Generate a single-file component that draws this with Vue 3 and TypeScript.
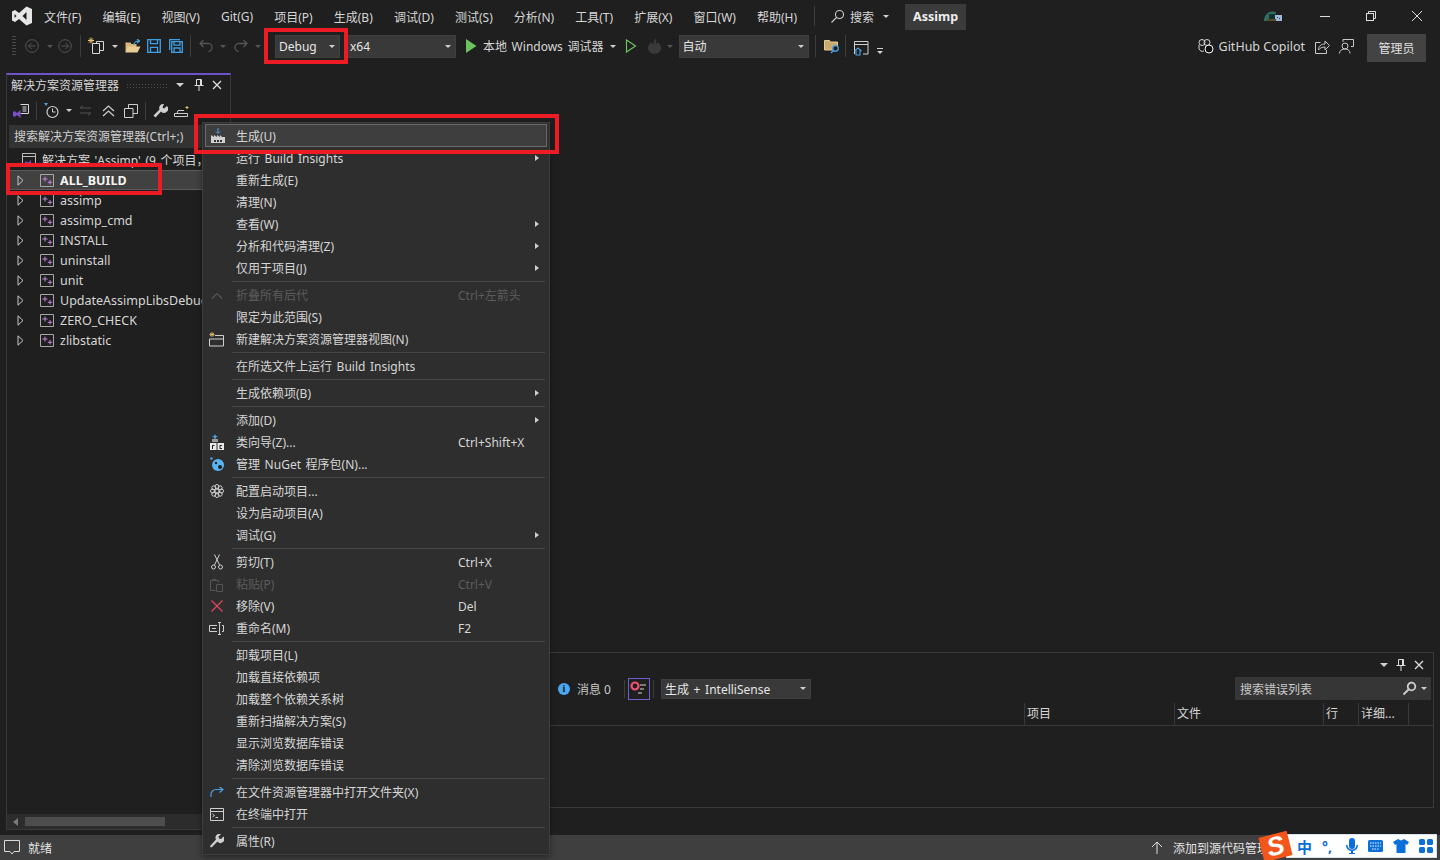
<script setup lang="ts">
interface MenuRow {
  label?: string
  key?: string
  arrow?: boolean
  off?: boolean
  icon?: string
  sep?: boolean
}

const menus = ['文件(F)', '编辑(E)', '视图(V)', 'Git(G)', '项目(P)', '生成(B)', '调试(D)', '测试(S)', '分析(N)', '工具(T)', '扩展(X)', '窗口(W)', '帮助(H)']

const projects = ['ALL_BUILD', 'assimp', 'assimp_cmd', 'INSTALL', 'uninstall', 'unit', 'UpdateAssimpLibsDebug', 'ZERO_CHECK', 'zlibstatic']

const rows: MenuRow[] = [
  { label: '生成(U)', icon: 'build' },
  { label: '运行 Build Insights', arrow: true },
  { label: '重新生成(E)' },
  { label: '清理(N)' },
  { label: '查看(W)', arrow: true },
  { label: '分析和代码清理(Z)', arrow: true },
  { label: '仅用于项目(J)', arrow: true },
  { sep: true },
  { label: '折叠所有后代', key: 'Ctrl+左箭头', off: true, icon: 'collapse' },
  { label: '限定为此范围(S)' },
  { label: '新建解决方案资源管理器视图(N)', icon: 'newview' },
  { sep: true },
  { label: '在所选文件上运行 Build Insights' },
  { sep: true },
  { label: '生成依赖项(B)', arrow: true },
  { sep: true },
  { label: '添加(D)', arrow: true },
  { label: '类向导(Z)...', key: 'Ctrl+Shift+X', icon: 'wizard' },
  { label: '管理 NuGet 程序包(N)...', icon: 'nuget' },
  { sep: true },
  { label: '配置启动项目...', icon: 'gear' },
  { label: '设为启动项目(A)' },
  { label: '调试(G)', arrow: true },
  { sep: true },
  { label: '剪切(T)', key: 'Ctrl+X', icon: 'cut' },
  { label: '粘贴(P)', key: 'Ctrl+V', off: true, icon: 'paste' },
  { label: '移除(V)', key: 'Del', icon: 'remove' },
  { label: '重命名(M)', key: 'F2', icon: 'rename' },
  { sep: true },
  { label: '卸载项目(L)' },
  { label: '加载直接依赖项' },
  { label: '加载整个依赖关系树' },
  { label: '重新扫描解决方案(S)' },
  { label: '显示浏览数据库错误' },
  { label: '清除浏览数据库错误' },
  { sep: true },
  { label: '在文件资源管理器中打开文件夹(X)', icon: 'reveal' },
  { label: '在终端中打开', icon: 'terminal' },
  { sep: true },
  { label: '属性(R)', icon: 'wrench' },
]
</script>

<template>
  <div class="ide">
    <header class="titlebar">
      <svg class="logo" width="20" height="20" viewBox="0 0 20 20"><path d="M14.5 0.5 20 3v14l-5.5 2.5L7 13l-4 3-3-1.5v-9L3 4l4 3zM14.5 6 10.500 10l4 4zM2.500 8v4l2-2z" fill="#e6e6e6" fill-rule="evenodd"/></svg>
      <nav class="menus">
        <span v-for="m in menus" :key="m">{{ m }}</span>
      </nav>
      <i class="vsep tall"></i>
      <div class="search">
        <svg width="15" height="15" viewBox="0 0 15 15" fill="none" stroke="#cfcfcf" stroke-width="1.1"><circle cx="9.500" cy="5.500" r="4"/><path d="M6.500 8.500 1.500 13.500"/></svg>
        <span>搜索</span><b class="caret"></b>
      </div>
      <div class="solution">Assimp</div>
      <div class="winbtns">
        <svg class="tinypic" width="20" height="12" viewBox="0 0 20 12"><path d="M1 11a9 9 0 0 1 12-9l-2 9z" fill="#2f6f5f"/><path d="M6 4h6v7H6z" fill="#16322c"/><path d="M12 5h7v6h-7z" fill="#9fb8dc"/><path d="M4 9h9v2H4z" fill="#5a4a2a"/><path d="M14 7h1v1h-1zM16 8h1v1h-1z" fill="#2a3a5c"/></svg>
        <svg class="winic" width="12" height="12" viewBox="0 0 12 12"><path d="M1 6.500h10" stroke="#ddd"/></svg>
        <svg class="winic" width="12" height="12" viewBox="0 0 12 12" fill="none" stroke="#ddd"><rect x="1.500" y="3.500" width="7" height="7"/><path d="M3.500 3.500v-2h7v7h-2"/></svg>
        <svg class="winic" width="12" height="12" viewBox="0 0 12 12"><path d="M1 1l10 10M11 1 1 11" stroke="#ddd"/></svg>
      </div>
    </header>

    <div class="toolbar">
      <i class="grip"></i>
      <svg width="14" height="14" viewBox="0 0 14 14" fill="none" stroke="#555" class="t-back"><circle cx="7" cy="7" r="6.300"/><path d="M10.500 7h-7M6.500 4l-3 3 3 3"/></svg>
      <b class="caret dim c1"></b>
      <svg width="14" height="14" viewBox="0 0 14 14" fill="none" stroke="#555" class="t-fwd"><circle cx="7" cy="7" r="6.300"/><path d="M3.500 7h7M7.500 4l3 3-3 3"/></svg>
      <i class="vsep s1"></i>
      <svg width="18" height="18" viewBox="0 0 18 18" fill="none" stroke="#d8d8d8" class="t-new"><path d="M5.500 6.500h7v10h-7z"/><path d="M9.500 6.500v-2h7v9h-4"/><path d="M4 0.500v6M1 3.500h6M2 1.500l4 4M6 1.500l-4 4" stroke="#e8c56b"/></svg>
      <b class="caret c2"></b>
      <svg width="16" height="14" viewBox="0 0 16 14" class="t-open"><path d="M0.500 3.500h5l1 1.500h5v8h-11z" fill="#dcb67a"/><path d="M3 7.500h12.500l-3 6h-12z" fill="#e9cd96"/><path d="M9 6c0-3 2-4 5-4M12 0l2.500 2L12 4" stroke="#4aa0e6" stroke-width="1.200" fill="none"/></svg>
      <svg width="14" height="14" viewBox="0 0 14 14" fill="none" stroke="#3e9fe6" stroke-width="1.300" class="t-save"><path d="M.7.7h12.600v12.600H.7z"/><path d="M3.500.7v4h7v-4M3.500 13.300v-5h7v5"/></svg>
      <svg width="14" height="14" viewBox="0 0 14 14" fill="none" stroke="#3e9fe6" stroke-width="1.300" class="t-saveall"><path d="M2.700 2.700h10.600v10.600H2.700z"/><path d="M.7 11V.7H11"/><path d="M5 2.700v3.500h6V2.700M5 13.300V9h6v4.300"/></svg>
      <i class="vsep s2"></i>
      <svg width="14" height="14" viewBox="0 0 14 14" fill="none" stroke="#565656" stroke-width="1.300" class="t-undo"><path d="M4.500 1 1 4.500 4.500 8M1 4.500h7.500a4 4 0 0 1 1 8"/></svg>
      <b class="caret dim c3"></b>
      <svg width="14" height="14" viewBox="0 0 14 14" fill="none" stroke="#565656" stroke-width="1.300" class="t-redo"><path d="M9.500 1 13 4.500 9.500 8M13 4.500H5.500a4 4 0 0 0-1 8"/></svg>
      <b class="caret dim c4"></b>
      <div class="combo debug"><span>Debug</span><b class="caret"></b></div>
      <div class="combo x64"><span>x64</span><b class="caret"></b></div>
      <svg width="12" height="14" viewBox="0 0 12 14" class="t-play"><path d="M1 0l10.500 7L1 14z" fill="#6cc25f"/></svg>
      <span class="runlabel">本地 Windows 调试器</span>
      <b class="caret c5"></b>
      <svg width="12" height="14" viewBox="0 0 12 14" class="t-play2"><path d="M1.500 1l9 6-9 6z" fill="none" stroke="#6cc25f" stroke-width="1.200"/></svg>
      <svg width="14" height="16" viewBox="0 0 14 16" class="t-flame"><path d="M9 0c1 3-1 4 1 6 1-1 1-2 1-2 2 2 3 4 3 6a6.500 6 0 0 1-13 0c0-3 2-4 3-6 1 1 1 2 2 2 1-2 1-4 3-6z" fill="#3a3a3a"/></svg>
      <b class="caret dim c6"></b>
      <div class="combo auto"><span>自动</span><b class="caret"></b></div>
      <i class="vsep s3"></i>
      <svg width="16" height="16" viewBox="0 0 16 16" class="t-folder"><path d="M.5 2.500h5l1 1.500h7v8H.5z" fill="#c9aa71" stroke="#e6cb95"/><circle cx="11.500" cy="10.500" r="2.800" fill="#1f1f1f" stroke="#4aa0e6" stroke-width="1.300"/><path d="M9.500 12.500 7 15" stroke="#4aa0e6" stroke-width="1.500"/></svg>
      <i class="vsep s4"></i>
      <svg width="15" height="15" viewBox="0 0 15 15" fill="none" class="t-win"><path d="M.5 13V.5h13.500V13H9M.5 3.500h13.500" stroke="#d0d0d0"/><path d="M.5 10 4 7l3.500 3M2 9v5h4V9" stroke="#4aa0e6" stroke-width="1.100"/></svg>
      <div class="overflow"><i></i><b class="caret"></b></div>
      <div class="tb-right">
        <svg width="16" height="16" viewBox="0 0 16 16" fill="none" stroke="#d8d8d8"><circle cx="4" cy="4.500" r="3"/><circle cx="9" cy="4.500" r="3"/><path d="M1 7v3.500a3.500 3.500 0 0 0 5 2.500"/><circle cx="11" cy="11" r="4" fill="#111" stroke="#fff"/></svg>
        <span class="copilot">GitHub Copilot</span>
        <svg class="t-share" width="15" height="15" viewBox="0 0 15 15" fill="none" stroke="#c8c8c8"><path d="M5.500 3.500H.5v11h11V11"/><path d="M3.500 11c0-4 3-6 6.500-6V2l4.500 4.500L10 11V8c-3 0-5 1-6.500 3z"/></svg>
        <svg class="t-feedback" width="15" height="15" viewBox="0 0 15 15" fill="none" stroke="#c8c8c8"><path d="M4 3V.5h10.500v7H12"/><circle cx="6" cy="7" r="3"/><path d="M.5 14.500c0-3 2.500-4.500 5.500-4.500s5 1.500 5 4.500"/></svg>
        <button class="admin">管理员</button>
      </div>
    </div>

    <main class="workspace">
      <section class="explorer">
        <div class="panel-head">
          <span class="panel-title">解决方案资源管理器</span>
          <i class="dots"></i>
          <b class="caret big"></b>
          <svg width="10" height="12" viewBox="0 0 10 12" fill="none" stroke="#ddd" class="pin"><path d="M2.500.5h5v6h-5zM.5 6.500h9M5 7v5M6.500 1v5" /></svg>
          <svg width="10" height="10" viewBox="0 0 10 10" class="close"><path d="M1 1l8 8M9 1 1 9" stroke="#ddd" stroke-width="1.300"/></svg>
        </div>
        <div class="panel-tools">
          <svg width="16" height="16" viewBox="0 0 16 16" fill="none"><path d="M7.500 1.500h8v9h-8M9.500 4h4M9.500 6h4M9.500 8h4" stroke="#d8d8d8"/><path d="M0 9l1.500-1 2.500 2 3.500-3v8L4 12l-2.500 2L0 13z" fill="#7b4fc9"/></svg>
          <i class="vsep"></i>
          <svg width="16" height="16" viewBox="0 0 16 16" fill="none"><path d="M0 0h4L2 3z" fill="#4aa0e6"/><circle cx="8.500" cy="9" r="5.500" stroke="#d0d0d0" stroke-width="1.200"/><path d="M8.500 5.500V9h3" stroke="#d0d0d0"/></svg>
          <b class="caret"></b>
          <svg class="dimic" width="13" height="11" viewBox="0 0 13 11" fill="none" stroke="#555"><path d="M4 .5 1 3h11M9 10.500 12 8H1"/></svg>
          <svg class="chev" width="13" height="12" viewBox="0 0 13 12" fill="none" stroke="#cfcfcf" stroke-width="1.200"><path d="M1 6l5.500-5L12 6M1 11l5.500-5 5.500 5"/></svg>
          <svg class="copy" width="14" height="14" viewBox="0 0 14 14" fill="none" stroke="#d0d0d0"><path d="M.5 4.500h8.500v9H.5z"/><path d="M4.500 4.500v-4h9v9H9"/></svg>
          <i class="vsep"></i>
          <svg width="15" height="15" viewBox="0 0 15 15"><path d="M14 3l-3 2.500-1.500-1 1.500-3.500a4 4 0 0 0-4.500 5.500L.5 12.500 2.500 14.500 8 8.500A4 4 0 0 0 14 3z" fill="#cfcfcf"/></svg>
          <svg class="bench" width="16" height="12" viewBox="0 0 16 12" fill="none" stroke="#cfcfcf"><path d="M.5 8.500h13v3H.5zM3 8.500l1-3h6"/><path d="M13 1v3M11.500 2.500h3" stroke="#e8c56b"/></svg>
        </div>
        <div class="panel-search">搜索解决方案资源管理器(Ctrl+;)</div>
        <div class="tree">
          <div class="tree-root">
            <svg width="14" height="14" viewBox="0 0 14 14"><path d="M.5.500h13v13H.500zM.500 3.500h13" fill="none" stroke="#bdbdbd"/><path d="M3 9l1-.800 2 1.500 3-2.700v6l-3-2-2 1.500L3 12z" fill="#7b4fc9"/></svg>
            <span>解决方案 'Assimp' (9 个项目，共 9 个)</span>
          </div>
          <div v-for="(p, i) in projects" :key="p" class="tree-row" :class="{ picked: i === 0 }">
            <svg class="twist" width="7" height="11" viewBox="0 0 7 11"><path d="M1 .800 6 5.500 1 10.200z" fill="none" stroke="#c8c8c8"/></svg>
            <svg width="14" height="13" viewBox="0 0 14 13" fill="none"><path d="M.5.500h13v12H.500z" stroke="#a8a8a8"/><path d="M5 2.500v5M2.500 5h5M10 6v4.500M7.800 8.300h4.400" stroke="#c586e0"/></svg>
            <span>{{ p }}</span>
          </div>
        </div>
        <div class="hscroll">
          <svg width="6" height="8" viewBox="0 0 6 8"><path d="M5 0v8L0 4z" fill="#7a7a7a"/></svg>
          <i></i>
        </div>
      </section>

      <section class="errors">
        <div class="err-head">
          <b class="caret big"></b>
          <svg width="10" height="12" viewBox="0 0 10 12" fill="none" stroke="#ddd" class="pin"><path d="M2.500.5h5v6h-5zM.5 6.500h9M5 7v5M6.500 1v5"/></svg>
          <svg width="10" height="10" viewBox="0 0 10 10" class="close"><path d="M1 1l8 8M9 1 1 9" stroke="#ddd" stroke-width="1.300"/></svg>
        </div>
        <div class="err-tools">
          <span class="info-dot">i</span>
          <span class="msgs">消息 0</span>
          <i class="vsep"></i>
          <span class="filter">
            <svg width="20" height="18" viewBox="0 0 20 18"><circle cx="6" cy="6" r="3.500" fill="#1f1f1f" stroke="#f1536e" stroke-width="2.200"/><path d="M11 5h6M11 9h4M9 13h4" stroke="#d8d8d8"/></svg>
          </span>
          <i class="vsep"></i>
          <div class="combo scope"><span>生成 + IntelliSense</span><b class="caret"></b></div>
          <div class="err-search">
            <span>搜索错误列表</span>
            <svg width="15" height="15" viewBox="0 0 15 15" fill="none" stroke="#d0d0d0" stroke-width="1.800"><circle cx="9.500" cy="5.500" r="3.800"/><path d="M6.500 8.500 1.500 13.500"/></svg>
            <b class="caret"></b>
          </div>
        </div>
        <div class="err-cols">
          <span class="col-project">项目</span>
          <span class="col-file">文件</span>
          <span class="col-line">行</span>
          <span class="col-detail">详细...</span>
          <span class="col-end"></span>
        </div>
      </section>
    </main>

    <footer class="statusbar">
      <svg width="16" height="16" viewBox="0 0 16 16" fill="none" stroke="#d8d8d8"><path d="M.5.500h15v11h-5.500L8 14l-2-2.500H.5z"/></svg>
      <span class="ready">就绪</span>
      <svg class="up" width="12" height="13" viewBox="0 0 12 13" fill="none" stroke="#e0e0e0"><path d="M6 13V1M1 6l5-5 5 5"/></svg>
      <span class="vcs">添加到源代码管理</span>
    </footer>

    <!-- context menu floats over the panels -->
    <div class="ctx">
      <template v-for="(r, i) in rows" :key="i">
        <div v-if="r.sep" class="ctx-sep"></div>
        <div v-else class="ctx-row" :class="{ off: r.off, hot: i === 0 }">
          <span class="ctx-ic">
            <svg v-if="r.icon === 'build'" width="16" height="16" viewBox="0 0 16 16"><path d="M8 0v5M6 3.500l2 2 2-2" fill="none" stroke="#4aa0e6"/><path d="M1 7l3 2V7l3 2V7l3 2V7l2 2h3v6H1z" fill="#d0d0d0"/><path d="M4 12h2v2H4zM7 12h2v2H7zM10 12h2v2h-2z" fill="#333"/></svg>
            <svg v-else-if="r.icon === 'collapse'" width="12" height="7" viewBox="0 0 12 7"><path d="M1 6.500 6 1.500l5 5" fill="none" stroke="#555" stroke-width="1.200"/></svg>
            <svg v-else-if="r.icon === 'newview'" width="15" height="15" viewBox="0 0 15 15" fill="none"><path d="M6 3.500h8.500v10.500H.5V7M.5 7h14" stroke="#d0d0d0"/><path d="M3 0v5M.5 2.500h5M1 1l4 3M5 1 1 4" stroke="#e8c56b" stroke-width=".8"/></svg>
            <svg v-else-if="r.icon === 'wizard'" width="14" height="16" viewBox="0 0 14 16"><path d="M5 0l1 2 2 .5-2 1L5 6 4 3.500l-2-1 2-.5z" fill="#4aa0e6"/><path d="M2 5h6v3H2z" fill="#9a9a9a"/><path d="M0 9h6.500v7H0zM7.500 9H14v7H7.500z" fill="#e8e8e8"/><path d="M2 11h2.500v1H3v3H2zM9.500 11H12v1h-1.500v2H12v1H9.500z" fill="#222"/></svg>
            <svg v-else-if="r.icon === 'nuget'" width="14" height="14" viewBox="0 0 14 14"><circle cx="1.500" cy="1.500" r="1.300" fill="#4aa0e6"/><circle cx="8" cy="8" r="6" fill="#58b4f2"/><circle cx="10" cy="10" r="2" fill="#1d1d1d"/><circle cx="6" cy="6" r="1.200" fill="#1d1d1d"/></svg>
            <svg v-else-if="r.icon === 'gear'" width="14" height="14" viewBox="0 0 14 14" fill="none" stroke="#cfcfcf"><circle cx="7" cy="7" r="2"/><circle cx="7" cy="2.500" r="2"/><circle cx="7" cy="11.500" r="2"/><circle cx="2.500" cy="7" r="2"/><circle cx="11.500" cy="7" r="2"/><circle cx="3.800" cy="3.800" r="2"/><circle cx="10.200" cy="3.800" r="2"/><circle cx="3.800" cy="10.200" r="2"/><circle cx="10.200" cy="10.200" r="2"/></svg>
            <svg v-else-if="r.icon === 'cut'" width="12" height="16" viewBox="0 0 12 16" fill="none" stroke="#d0d0d0"><circle cx="2.500" cy="13" r="2"/><circle cx="9.500" cy="13" r="2"/><path d="M3.500 11 8.500.5M8.500 11 3.500.5"/></svg>
            <svg v-else-if="r.icon === 'paste'" width="13" height="15" viewBox="0 0 13 15" fill="none" stroke="#555"><path d="M5.500 13.500h-5v-10h8v2M2.500 3.500v-1h1.500a1.500 1.500 0 0 1 2 0v1"/><path d="M6.500 7.500h6v7h-6z"/></svg>
            <svg v-else-if="r.icon === 'remove'" width="12" height="12" viewBox="0 0 12 12"><path d="M.5.500l11 11M11.500.500l-11 11" stroke="#e8475f" stroke-width="1.100"/></svg>
            <svg v-else-if="r.icon === 'rename'" width="15" height="13" viewBox="0 0 15 13" fill="none" stroke="#cfcfcf"><path d="M8 3.500H.5v6H8M13 3.500h1.500v6H13M3 6.500h4"/><path d="M9 .5h3M9 12.500h3M10.500.5v12"/></svg>
            <svg v-else-if="r.icon === 'reveal'" width="14" height="12" viewBox="0 0 14 12" fill="none" stroke="#4aa0e6" stroke-width="1.200"><path d="M9.500 1 13 3.500 9.500 6.500M13 3.500H6a5 5 0 0 0-5 5V11"/></svg>
            <svg v-else-if="r.icon === 'terminal'" width="14" height="13" viewBox="0 0 14 13" fill="none" stroke="#cfcfcf"><path d="M.5.500h13v12H.500zM.500 3.500h13"/><path d="M2.500 6l2 1.500-2 1.500M5.500 9.500h2.500"/></svg>
            <svg v-else-if="r.icon === 'wrench'" width="14" height="14" viewBox="0 0 14 14"><path d="M13.500 2.500 11 5 9 4.500 8.500 2.500 11 .2A3.800 3.800 0 0 0 6 5.500L.5 11.500c-.5.500-.5 1 0 1.500.5.500 1 .5 1.500 0L7.500 7.500a3.800 3.800 0 0 0 6-5z" fill="#cfcfcf"/></svg>
          </span>
          <span class="ctx-label">{{ r.label }}</span>
          <span class="ctx-key">{{ r.key }}</span>
          <b v-if="r.arrow" class="ctx-arrow"></b>
        </div>
      </template>
    </div>

    <!-- red annotation frames drawn on the screenshot -->
    <i class="mark mark-debug"></i>
    <i class="mark mark-build"></i>
    <i class="mark mark-all"></i>

    <!-- input method bar over the status bar -->
    <div class="ime">
      <span class="ime-s">S</span>
      <span class="ime-zh">中</span>
      <span class="ime-punc">°,</span>
      <svg width="12" height="16" viewBox="0 0 12 16" fill="#0a6fd8"><rect x="3" y="0" width="6" height="11" rx="3"/><path d="M0 7h1.500a4.500 4.500 0 0 0 9 0H12a6 6 0 0 1-5 6v2h2v1H3v-1h2v-2a6 6 0 0 1-5-6z"/></svg>
      <svg width="15" height="12" viewBox="0 0 15 12"><rect width="15" height="12" rx="1.500" fill="#0a6fd8"/><path d="M2 3h11M2 6h11M4 9h7" stroke="#fff" stroke-dasharray="1.500 1"/></svg>
      <svg width="16" height="14" viewBox="0 0 16 14"><path d="M5 0l3 1.500L11 0l5 3-2 3-1.500-1v9h-9V5L2 6 0 3z" fill="#0a6fd8"/></svg>
      <svg width="14" height="14" viewBox="0 0 14 14" fill="#0a6fd8"><rect width="6" height="6" rx="1.500"/><rect x="8" width="6" height="6" rx="1.500"/><rect y="8" width="6" height="6" rx="1.500"/><rect x="8" y="8" width="6" height="6" rx="1.500"/></svg>
    </div>
  </div>
</template>

<style>
html, body { margin: 0; background: #1f1f1f; }
</style>

<style scoped>
.ide {
  position: relative; width: 1440px; height: 860px; overflow: hidden;
  display: flex; flex-direction: column;
  background: #1f1f1f; color: #d6d6d6;
  font: 12px "Noto Sans", "Noto Sans CJK SC", sans-serif;
}
svg { flex: none; display: block; }
.caret {
  display: inline-block; flex: none; width: 0; height: 0;
  border-left: 3px solid transparent; border-right: 3px solid transparent; border-top: 3px solid #d0d0d0;
}
.caret.dim { border-top-color: #555; }
.caret.big { border-left-width: 4px; border-right-width: 4px; border-top-width: 4px; }
.vsep { flex: none; display: block; width: 1px; height: 22px; background: #3d3d3d; }

.titlebar { height: 32px; flex: none; display: flex; align-items: center; }
.logo { margin-left: 12px; }
.menus { display: flex; gap: 21.100px; margin-left: 12px; padding-top: 2px; white-space: nowrap; }
.vsep.tall { margin-left: 17px; height: 20px; }
.search { display: flex; align-items: center; gap: 5px; margin-left: 15px; padding-top: 1px; }
.search .caret { margin-left: 4px; }
.solution {
  margin-left: 16px; width: 61px; height: 26px; margin-top: 2px; line-height: 26px; text-align: center;
  background: #3b3b3b; color: #eee; font-weight: 700; font-size: 12.500px;
}
.winbtns { margin-left: auto; display: flex; align-items: center; }
.tinypic { margin-right: 36px; }
.winic { margin-right: 34px; }
.winic:last-child { margin-right: 17px; }

.toolbar { height: 30px; padding-bottom: 2px; box-sizing: border-box; flex: none; display: flex; align-items: center; position: relative; }
.grip {
  display: block; width: 4px; height: 20px; margin-left: 12px;
  background: repeating-linear-gradient(#4a4a4a 0 1px, transparent 1px 3px);
}
.t-back { margin-left: 9px; }
.c1 { margin-left: 8px; }
.t-fwd { margin-left: 5px; }
.s1 { margin-left: 8px; }
.t-new { margin-left: 6px; }
.c2 { margin-left: 7px; }
.t-open { margin-left: 7px; }
.t-save { margin-left: 6px; }
.t-saveall { margin-left: 8px; }
.s2 { margin-left: 7px; }
.t-undo { margin-left: 8px; }
.c3 { margin-left: 7px; }
.t-redo { margin-left: 8px; }
.c4 { margin-left: 7px; }
.combo {
  display: flex; align-items: center; justify-content: space-between; flex: none;
  height: 23px; padding: 0 4px 0 3px; box-sizing: border-box;
  background: #393939; border: 1px solid #3f3f3f; color: #e6e6e6; font-size: 12px;
}
.debug { margin-left: 14px; width: 65px; }
.x64 { margin-left: 5px; width: 111px; padding-left: 4px; }
.t-play { margin-left: 9px; }
.runlabel { margin-left: 6px; white-space: nowrap; word-spacing: 1.500px; }
.c5 { margin-left: 6px; }
.t-play2 { margin-left: 9px; }
.t-flame { margin-left: 10px; }
.c6 { margin-left: 6px; }
.auto { margin-left: 6px; width: 130px; }
.s3 { margin-left: 6px; }
.t-folder { margin-left: 8px; }
.s4 { margin-left: 5px; }
.t-win { margin-left: 8px; margin-top: 4px; }
.overflow { margin-left: 8px; margin-top: 10px; display: flex; flex-direction: column; gap: 2px; align-items: center; }
.overflow i { display: block; width: 6px; height: 1px; background: #d0d0d0; }
.tb-right { margin-left: auto; display: flex; align-items: center; padding-right: 14px; }
.copilot { margin-left: 5px; font-size: 12.500px; white-space: nowrap; }
.t-share { margin-left: 10px; }
.t-feedback { margin-left: 9px; }
.admin {
  margin-left: 13px; margin-top: 4px; width: 59px; height: 28px; padding: 0; border: 0;
  background: #434343; color: #e0e0e0; font: inherit;
}

.workspace {
  flex: 1; min-height: 0; display: flex; gap: 5px; padding: 11px 6px 5px; box-sizing: border-box;
}
.explorer {
  width: 225px; flex: none; display: flex; flex-direction: column; box-sizing: border-box;
  border: 1px solid #3a3a3a; border-top: 2px solid #6f52c8;
}
.panel-head { height: 21px; box-sizing: border-box; display: flex; align-items: center; padding: 0 8px 1px 4px; flex: none; }
.panel-title { white-space: nowrap; }
.dots {
  flex: 1; height: 5px; margin: 0 7px;
  background: radial-gradient(circle, #4b4b4b 0.500px, transparent 1px) 0 0 / 3px 3px;
}
.pin { margin-left: 10px; }
.close { margin-left: 8px; }
.panel-tools { height: 29px; display: flex; align-items: center; gap: 7px; padding-left: 6px; flex: none; }
.panel-tools .vsep { height: 18px; }
.panel-tools .caret { margin-left: -1px; }
.panel-tools .chev { margin-left: 3px; }
.panel-tools .copy { margin-left: 2px; }
.panel-tools .bench { margin-left: -1px; }
.panel-search {
  height: 23px; line-height: 23px; padding-left: 5px; margin: 0 2px; flex: none; white-space: nowrap; overflow: hidden;
  background: #333; color: #cfcfcf;
}
.tree { flex: 1; min-height: 0; padding-top: 2px; overflow: hidden; font-size: 12.500px; }
.tree-root { height: 20px; display: flex; align-items: center; gap: 6px; padding-left: 15px; white-space: nowrap; font-size: 12px; word-spacing: 1.500px; }
.tree-row { height: 20px; display: flex; align-items: center; padding-left: 10px; white-space: nowrap; }
.tree-row.picked { background: #414141; color: #f4f4f4; font-weight: 700; box-shadow: inset 0 1px #5a5a5a, inset 0 -1px #5a5a5a; }
.twist { margin-right: 16px; }
.tree-row span { margin-left: 6px; }
.hscroll { height: 15px; flex: none; display: flex; align-items: center; gap: 6px; padding-left: 6px; background: #2c2c2c; }
.hscroll i { display: block; width: 140px; height: 9px; background: #4d4d4d; }

.errors {
  flex: 1; align-self: flex-end; height: 156px; box-sizing: border-box; margin-bottom: 22px;
  border: 1px solid #3a3a3a; display: flex; flex-direction: column;
}
.err-head { height: 23px; flex: none; display: flex; align-items: center; justify-content: flex-end; padding-right: 9px; }
.err-head .pin { margin-left: 8px; }
.err-tools { height: 25px; flex: none; display: flex; align-items: center; padding-left: 321px; }
.err-tools .vsep { height: 18px; }
.info-dot {
  width: 12px; height: 12px; border-radius: 50%; background: #4aa8f0; color: #10202c;
  font: 700 10px/12px "Liberation Serif", serif; text-align: center;
}
.msgs { margin-left: 7px; margin-right: 13px; color: #c9c9c9; font-size: 12px; }
.filter { width: 20px; height: 20px; margin: 0 3px; border: 1px solid #6c5fd0; display: flex; align-items: center; justify-content: center; }
.scope { margin-left: 7px; width: 150px; height: 20px; word-spacing: 1.500px; }
.err-search {
  margin-left: auto; margin-right: 2px; width: 196px; height: 23px; box-sizing: border-box;
  display: flex; align-items: center; gap: 4px; padding: 0 4px 0 5px; background: #363636; color: #c8c8c8;
}
.err-search span { flex: 1; }
.err-cols { height: 22px; margin-top: 2px; flex: none; display: flex; border-bottom: 1px solid #3a3a3a; }
.err-cols span { box-sizing: border-box; border-left: 1px solid #3a3a3a; padding-left: 2px; line-height: 22px; flex: none; }
.col-project { margin-left: 787px; width: 150px; }
.col-file { width: 149px; }
.col-line { width: 35px; }
.col-detail { width: 50px; }
.col-end { width: 23px; }

.statusbar {
  height: 25px; flex: none; display: flex; align-items: center; background: #3f3f3f; color: #e4e4e4;
  padding-left: 4px;
}
.ready { margin-left: 8px; }
.up { margin-left: auto; }
.vcs { margin-left: 10px; width: 88px; margin-right: 179px; white-space: nowrap; }

.ctx {
  position: absolute; left: 202px; top: 122px; width: 348px; height: 733px; box-sizing: border-box;
  padding: 1px 2px 0 1px; background: #2e2e2e; border: 1px solid #3e3e3e;
  box-shadow: 0 2px 6px rgba(0, 0, 0, .4);
}
.ctx-row {
  height: 22px; display: grid; grid-template-columns: 32px 222px 1fr 12px; align-items: center;
  box-sizing: border-box; color: #d6d6d6; white-space: nowrap; word-spacing: 1.500px;
}
.ctx-row.hot { height: 23px; background: #3e3e3e; border: 1px solid #6a6a6a; margin-left: 1px; grid-template-columns: 30px 222px 1fr 12px; }
.ctx-row.off { color: #5c5c5c; }
.ctx-ic { display: flex; justify-content: center; align-items: center; padding-right: 7px; }
.ctx-arrow {
  width: 0; height: 0; border-top: 3.500px solid transparent; border-bottom: 3.500px solid transparent;
  border-left: 4px solid #cfcfcf;
}
.ctx-sep { height: 1px; margin: 2px 2px 2px 28px; background: #454545; }

.mark { position: absolute; display: block; box-sizing: border-box; border: 4px solid #ed1c24; }
.mark-debug { left: 264px; top: 28px; width: 84px; height: 36px; }
.mark-build { left: 194px; top: 114px; width: 365px; height: 40px; }
.mark-all { left: 6px; top: 163px; width: 156px; height: 32px; }

.ime {
  position: absolute; left: 1286px; top: 834px; width: 151px; height: 24px; box-sizing: border-box;
  background: #fff; display: flex; align-items: center; gap: 10px; padding-left: 10px;
  border: 1px solid #d8e4f0;
}
.ime-s {
  position: absolute; left: -26px; top: -1px; width: 29px; height: 25px; text-align: center;
  background: #f2561a; color: #fff; font: italic 700 26px/25px "Liberation Sans", sans-serif; transform: rotate(-14deg);
}
.ime-zh { color: #0a6fd8; font-size: 15px; font-weight: 700; }
.ime-punc { color: #0a6fd8; font-size: 14px; font-weight: 700; width: 14px; }
</style>
